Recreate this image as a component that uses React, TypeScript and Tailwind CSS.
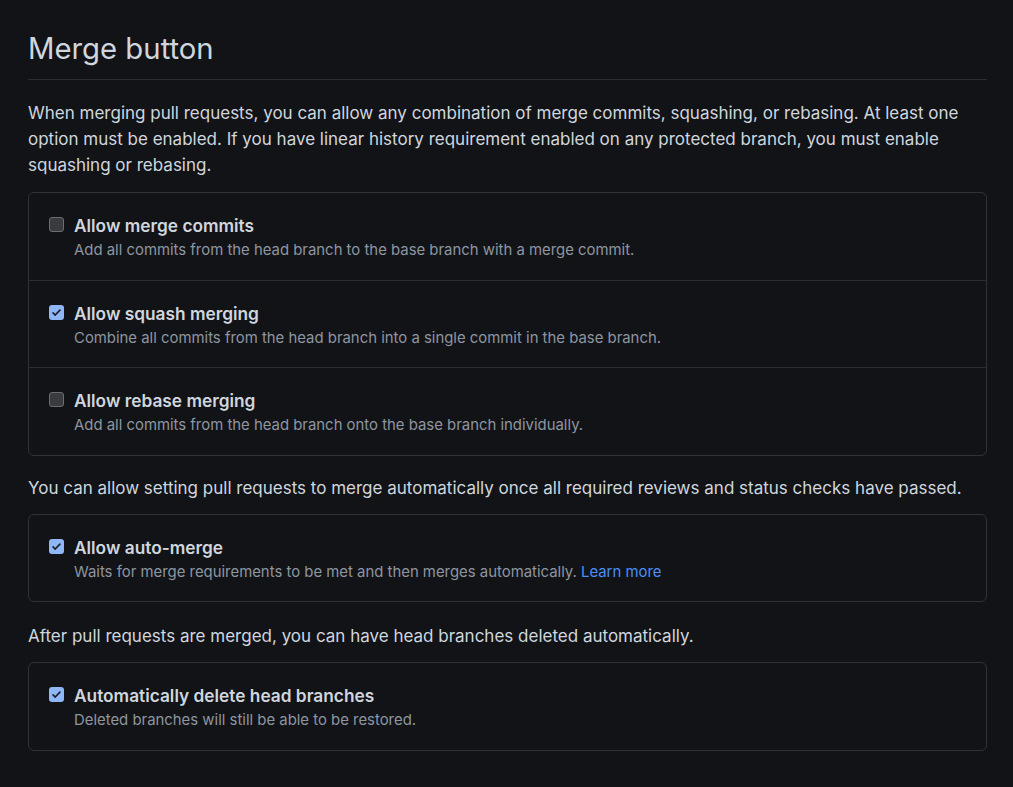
const rows1 = [
  { title: "Allow merge commits", desc: "Add all commits from the head branch to the base branch with a merge commit.", checked: false },
  { title: "Allow squash merging", desc: "Combine all commits from the head branch into a single commit in the base branch.", checked: true },
  { title: "Allow rebase merging", desc: "Add all commits from the head branch onto the base branch individually.", checked: false },
];

const Checkbox = ({ checked }: { checked: boolean }) =>
  checked ? (
    <span className="mt-[4px] flex h-[15px] w-[15px] shrink-0 items-center justify-center rounded-[3px] bg-[#8fb6f7]">
      <svg width="11" height="11" viewBox="0 0 16 16" fill="none">
        <path d="M3 8.5l3.2 3.2L13 4.5" stroke="#1d2026" strokeWidth="2.4" strokeLinecap="round" strokeLinejoin="round" />
      </svg>
    </span>
  ) : (
    <span className="mt-[4px] h-[15px] w-[15px] shrink-0 rounded-[3px] border border-[#6a6c70] bg-[#3a3b3e]" />
  );

const Row = ({ title, desc, checked, children }: { title: string; desc: string; checked: boolean; children?: React.ReactNode }) => (
  <div className="flex gap-[10px] px-5 pt-5 pb-[18.5px]">
    <Checkbox checked={checked} />
    <div>
      <div className="text-[17.3px] font-semibold leading-[26px] text-[#d0d6de]">{title}</div>
      <div className="text-[14.9px] leading-[22px] text-[#8d96a0]">
        {desc}
        {children}
      </div>
    </div>
  </div>
);

const App = () => {
  return (
    <div className="min-h-screen bg-[#121317] pl-7 pr-[26px] pt-[30px] font-['Inter',sans-serif] antialiased">
      <h2 className="border-b border-[#2a2d33] pb-[11px] text-[29.3px] font-normal leading-[38px] text-[#d0d6de]">
        Merge button
      </h2>

      <p className="mt-5 text-[17px] leading-[26px] text-[#d0d6de]">
        When merging pull requests, you can allow any combination of merge commits, squashing, or rebasing. At least one
        option must be enabled. If you have linear history requirement enabled on any protected branch, you must enable
        squashing or rebasing.
      </p>

      <div className="mt-[14px] divide-y divide-[#2a2d33] rounded-md border border-[#2f3237]">
        {rows1.map((r) => (
          <Row key={r.title} {...r} />
        ))}
      </div>

      <p className="mt-[19px] text-[17px] leading-[26px] text-[#d0d6de]">
        You can allow setting pull requests to merge automatically once all required reviews and status checks have passed.
      </p>

      <div className="mt-[13px] rounded-md border border-[#2f3237]">
        <Row title="Allow auto-merge" desc="Waits for merge requirements to be met and then merges automatically. " checked>
          <a href="#" className="text-[#4a8ff5]">Learn more</a>
        </Row>
      </div>

      <p className="mt-[21px] text-[17px] leading-[26px] text-[#d0d6de]">
        After pull requests are merged, you can have head branches deleted automatically.
      </p>

      <div className="mt-[13px] rounded-md border border-[#2f3237]">
        <Row title="Automatically delete head branches" desc="Deleted branches will still be able to be restored." checked />
      </div>
    </div>
  );
};

export default App;
